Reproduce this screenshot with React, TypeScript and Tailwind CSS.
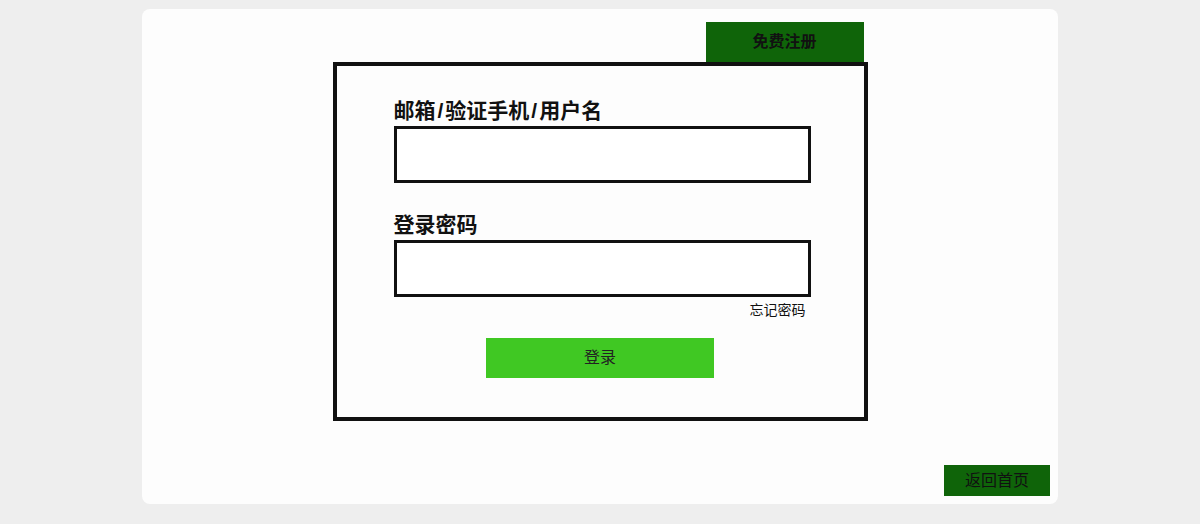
export default function App() {
  return (
    <div
      className="min-h-[524px] w-full bg-[#eeeeee] pt-[9px]"
      style={{ fontFamily: '"Liberation Sans", "Noto Sans CJK SC", sans-serif' }}
    >
      <div className="mx-auto flex h-[495px] w-[916px] flex-col rounded-lg bg-[#fdfdfd] pt-[13px] pb-[8px]">
        {/* 注册 + 登录框 */}
        <div className="mx-auto w-[535px]">
          <div className="flex justify-end pr-[4px]">
            <button className="h-[40px] w-[158px] bg-[#0f6409] text-[16px] font-bold text-[#111]">
              免费注册
            </button>
          </div>
          <div className="h-[359px] border-4 border-[#111] pt-[30px]">
            <div className="ml-[57px] w-[417px]">
              <label className="block text-[21px] leading-[30px] font-bold text-[#111]">
                邮箱<span className="px-[2px]">/</span>验证手机<span className="px-[2px]">/</span>用户名
              </label>
              <input className="block h-[57px] w-[417px] border-[3px] border-[#111] bg-white outline-none" />

              <label className="mt-[27px] block text-[21px] leading-[30px] font-bold text-[#111]">
                登录密码
              </label>
              <input
                type="password"
                className="block h-[57px] w-[417px] border-[3px] border-[#111] bg-white outline-none"
              />
              <div className="mt-[3px] pr-[5px] text-right text-[14px] leading-[20px] text-[#111]">
                忘记密码
              </div>
            </div>
            <div className="mt-[18px] flex justify-center">
              <button className="h-[40px] w-[228px] bg-[#40c823] text-[16px] text-[#222]">
                登录
              </button>
            </div>
          </div>
        </div>

        {/* 返回首页 */}
        <div className="mt-auto flex justify-end pr-[8px]">
          <button className="h-[31px] w-[106px] bg-[#0f6409] text-[16px] text-[#111]">
            返回首页
          </button>
        </div>
      </div>
    </div>
  )
}
